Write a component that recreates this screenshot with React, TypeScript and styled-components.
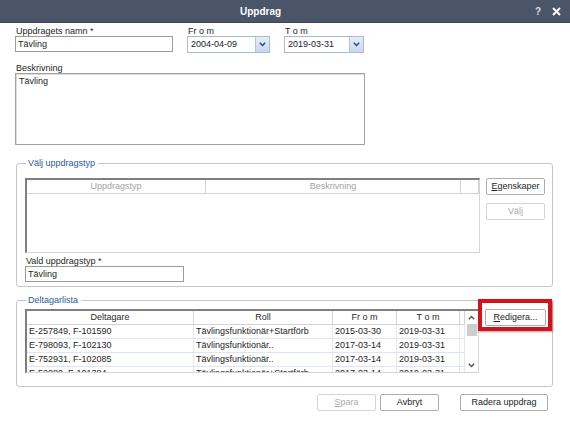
import React from "react";
import styled, { createGlobalStyle } from "styled-components";

const GlobalStyle = createGlobalStyle`
  html, body {
    margin: 0;
    padding: 0;
    background: #ffffff;
  }
  body {
    font-family: "Liberation Sans", Arial, sans-serif;
    font-size: 9px;
    color: #1e1e1e;
  }
`;

const Window = styled.div`
  width: 570px;
  height: 421px;
  background: #ffffff;
  display: flex;
  flex-direction: column;
  overflow: hidden;
`;

const TitleBar = styled.div`
  height: 22px;
  flex: 0 0 22px;
  background: #4b5568;
  border-bottom: 1px solid #3c4555;
  display: flex;
  align-items: center;
`;

const Title = styled.div`
  flex: 1;
  text-align: center;
  color: #ffffff;
  font-weight: bold;
  font-size: 10px;
`;

const TitleButtons = styled.div`
  width: 40px;
  display: flex;
  align-items: center;
  gap: 11px;
  padding-right: 9px;
  justify-content: flex-end;
  color: #d9dde4;
  font-weight: bold;
  font-size: 10px;
`;

const Content = styled.div`
  padding: 3px 17px 0 15px;
  display: flex;
  flex-direction: column;
`;

const Row = styled.div`
  display: flex;
  align-items: flex-start;
  gap: 14px;
`;

const Field = styled.div<{ $width: number; $top?: number }>`
  width: ${(p) => p.$width}px;
  margin-top: ${(p) => p.$top ?? 0}px;
  display: flex;
  flex-direction: column;
`;

const Label = styled.div`
  height: 10px;
  line-height: 10px;
  padding-left: 1px;
  white-space: nowrap;
  color: #1e1e1e;
`;

const TextBox = styled.div`
  height: 14px;
  border: 1px solid #9c9c9c;
  padding-left: 2px;
  line-height: 14px;
  background: #fff;
  color: #1e1e1e;
`;

const Combo = styled.div`
  height: 15px;
  border: 1px solid #abbad0;
  display: flex;
  align-items: stretch;
  background: #fff;
`;

const ComboText = styled.div`
  flex: 1;
  padding-left: 3px;
  line-height: 15px;
  color: #1b1b2a;
`;

const ComboButton = styled.div`
  width: 13px;
  background: linear-gradient(#e6eef9, #c8d7ee);
  border-left: 1px solid #b3c4de;
  display: flex;
  align-items: center;
  justify-content: center;
`;

const TextArea = styled.div`
  width: 345px;
  height: 68px;
  border: 1px solid #a2a2a2;
  box-shadow: inset 1px 1px 0 #dcdcdc;
  padding: 2px 0 0 3px;
  color: #1e1e1e;
`;

const Group = styled.fieldset<{ $top: number }>`
  margin: ${(p) => p.$top}px 0 0 1px;
  width: 537px;
  box-sizing: border-box;
  border: 1px solid #c6c6c6;
  border-radius: 3px;
  padding: 0 6px 4px 8px;
  min-width: 0;
`;

const Legend = styled.legend`
  padding: 0 3px 0 2px;
  margin-left: 1px;
  color: #2a5b9c;
  font-size: 9px;
  line-height: 11px;
`;

const GroupRow = styled.div<{ $top: number; $bottom?: number }>`
  display: flex;
  align-items: flex-start;
  gap: 6px;
  margin-top: ${(p) => p.$top}px;
  margin-bottom: ${(p) => p.$bottom ?? 0}px;
`;

const TypeGrid = styled.div`
  width: 455px;
  height: 75px;
  box-sizing: border-box;
  border-top: 2px solid #7f7f7f;
  border-left: 2px solid #7f7f7f;
  border-right: 1px solid #d6d6d6;
  border-bottom: 1px solid #d6d6d6;
`;

const HeaderRow = styled.div<{ $cols: string }>`
  display: grid;
  grid-template-columns: ${(p) => p.$cols};
  height: 13px;
  border-bottom: 1px solid #d3d3d3;
`;

const HeaderCell = styled.div<{ $muted?: boolean }>`
  text-align: center;
  line-height: 13px;
  color: ${(p) => (p.$muted ? "#a3a3a3" : "#2a2a2a")};
  border-right: 1px solid #d3d3d3;
  white-space: nowrap;
  overflow: hidden;
`;

const ButtonColumn = styled.div`
  display: flex;
  flex-direction: column;
  gap: 8px;
`;

const Button = styled.div<{ $width: number; $disabled?: boolean }>`
  width: ${(p) => p.$width}px;
  height: 15px;
  box-sizing: content-box;
  border: 1px solid ${(p) => (p.$disabled ? "#d4d4d4" : "#adadad")};
  border-radius: 2px;
  background: #ffffff;
  text-align: center;
  line-height: 15px;
  color: ${(p) => (p.$disabled ? "#ababab" : "#1e1e1e")};
  white-space: nowrap;
  u {
    text-decoration: underline;
  }
`;

const ListFrame = styled.div`
  width: 455px;
  height: 64px;
  box-sizing: border-box;
  display: flex;
  border-top: 2px solid #7f7f7f;
  border-left: 2px solid #7f7f7f;
  border-right: 1px solid #d6d6d6;
  border-bottom: 1px solid #d6d6d6;
  overflow: hidden;
`;

const ListBody = styled.div`
  flex: 1;
  display: flex;
  flex-direction: column;
`;

const ListRow = styled.div<{ $cols: string }>`
  display: grid;
  grid-template-columns: ${(p) => p.$cols};
  flex: 0 0 13px;
  height: 13px;
  border-bottom: 1px solid #dfe5ee;
`;

const Cell = styled.div`
  padding-left: 2px;
  line-height: 13px;
  border-right: 1px solid #e3e8ef;
  white-space: nowrap;
  overflow: hidden;
  color: #1e1e1e;
`;

const ScrollBar = styled.div`
  width: 13px;
  background: #ffffff;
  display: flex;
  flex-direction: column;
  align-items: center;
`;

const ScrollArrow = styled.div`
  height: 13px;
  width: 100%;
  display: flex;
  align-items: center;
  justify-content: center;
`;

const ScrollThumb = styled.div`
  width: 10px;
  height: 12px;
  background: #cdcdcd;
`;

const ScrollTrack = styled.div`
  flex: 1;
`;

const EditWrap = styled.div`
  position: relative;
`;

const Highlight = styled.div`
  position: absolute;
  left: -7px;
  top: -10px;
  width: 66px;
  height: 24px;
  border: 4px solid #d4121b;
  box-shadow: 1px 1px 2px rgba(0, 0, 0, 0.35);
`;

const Footer = styled.div`
  display: flex;
  align-items: center;
  margin-top: 7px;
  padding-left: 302px;
  gap: 4px;
`;

const Spacer = styled.div`
  width: 13px;
`;

const Chevron = ({ up, color }: { up?: boolean; color: string }) => (
  <svg width="7" height="5" viewBox="0 0 7 5">
    <path
      d={up ? "M0.8 4.2 L3.5 1.4 L6.2 4.2" : "M0.8 0.8 L3.5 3.6 L6.2 0.8"}
      fill="none"
      stroke={color}
      strokeWidth="1.4"
    />
  </svg>
);

const CloseIcon = () => (
  <svg width="9" height="9" viewBox="0 0 9 9">
    <path d="M1 1 L8 8 M8 1 L1 8" stroke="#ffffff" strokeWidth="2" />
  </svg>
);

const typeCols = "179px 255px 1fr";
const listCols = "167px 139px 64px 63px 1fr";

const participants = [
  ["E-257849, F-101590", "Tävlingsfunktionär+Startförb", "2015-03-30", "2019-03-31"],
  ["E-798093, F-102130", "Tävlingsfunktionär..", "2017-03-14", "2019-03-31"],
  ["E-752931, F-102085", "Tävlingsfunktionär..", "2017-03-14", "2019-03-31"],
  ["E-52080, F-101384", "Tävlingsfunktionär+Startförb", "2017-03-14", "2019-03-31"],
];

export default function App() {
  return (
    <>
      <GlobalStyle />
      <Window>
        <TitleBar>
          <Title>Uppdrag</Title>
          <TitleButtons>
            <span>?</span>
            <CloseIcon />
          </TitleButtons>
        </TitleBar>
        <Content>
          <Row>
            <Field $width={158}>
              <Label>Uppdragets namn *</Label>
              <TextBox>Tävling</TextBox>
            </Field>
            <Field $width={83}>
              <Label>Fr o m</Label>
              <Combo>
                <ComboText>2004-04-09</ComboText>
                <ComboButton>
                  <Chevron color="#2c4673" />
                </ComboButton>
              </Combo>
            </Field>
            <Field $width={80}>
              <Label>T o m</Label>
              <Combo>
                <ComboText>2019-03-31</ComboText>
                <ComboButton>
                  <Chevron color="#2c4673" />
                </ComboButton>
              </Combo>
            </Field>
          </Row>
          <Field $width={350} $top={10}>
            <Label>Beskrivning</Label>
            <TextArea>Tävling</TextArea>
          </Field>

          <Group $top={13}>
            <Legend>Välj uppdragstyp</Legend>
            <GroupRow $top={9}>
              <TypeGrid>
                <HeaderRow $cols={typeCols}>
                  <HeaderCell $muted>Uppdragstyp</HeaderCell>
                  <HeaderCell $muted>Beskrivning</HeaderCell>
                  <HeaderCell $muted />
                </HeaderRow>
              </TypeGrid>
              <ButtonColumn>
                <Button $width={57}>
                  <u>E</u>genskaper
                </Button>
                <Button $width={57} $disabled>
                  Väl<u>j</u>
                </Button>
              </ButtonColumn>
            </GroupRow>
            <Field $width={159} $top={3}>
              <Label>Vald uppdragstyp *</Label>
              <TextBox>Tävling</TextBox>
            </Field>
          </Group>

          <Group $top={8}>
            <Legend>Deltagarlista</Legend>
            <GroupRow $top={3} $bottom={9}>
              <ListFrame>
                <ListBody>
                  <HeaderRow $cols={listCols}>
                    <HeaderCell>Deltagare</HeaderCell>
                    <HeaderCell>Roll</HeaderCell>
                    <HeaderCell>Fr o m</HeaderCell>
                    <HeaderCell>T o m</HeaderCell>
                    <HeaderCell />
                  </HeaderRow>
                  {participants.map((p, i) => (
                    <ListRow key={i} $cols={listCols}>
                      <Cell>{p[0]}</Cell>
                      <Cell>{p[1]}</Cell>
                      <Cell>{p[2]}</Cell>
                      <Cell>{p[3]}</Cell>
                      <Cell />
                    </ListRow>
                  ))}
                </ListBody>
                <ScrollBar>
                  <ScrollArrow>
                    <Chevron up color="#555" />
                  </ScrollArrow>
                  <ScrollThumb />
                  <ScrollTrack />
                  <ScrollArrow>
                    <Chevron color="#555" />
                  </ScrollArrow>
                </ScrollBar>
              </ListFrame>
              <EditWrap>
                <Button $width={59}>
                  <u>R</u>edigera...
                </Button>
                <Highlight />
              </EditWrap>
            </GroupRow>
          </Group>

          <Footer>
            <Button $width={57} $disabled>
              <u>S</u>para
            </Button>
            <Button $width={57}>Avbryt</Button>
            <Spacer />
            <Button $width={86}>Radera uppdrag</Button>
          </Footer>
        </Content>
      </Window>
    </>
  );
}
